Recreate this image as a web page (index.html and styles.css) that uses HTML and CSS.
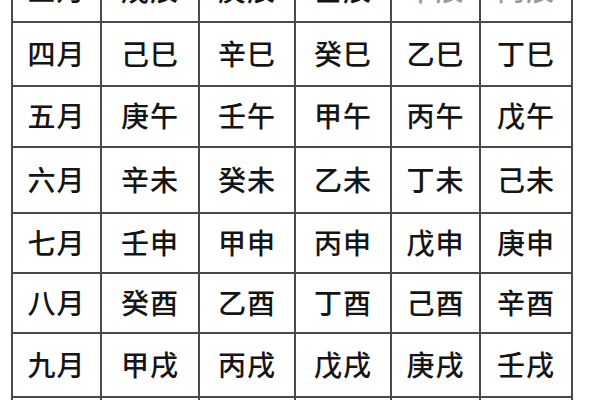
FILE: index.html
```html
<!DOCTYPE html>
<html lang="zh">
<head>
<meta charset="utf-8">
<link rel="stylesheet" href="styles.css">
</head>
<body>
<div class="table">
  <div class="cell">三月</div><div class="cell">戊辰</div><div class="cell">庚辰</div><div class="cell">壬辰</div><div class="cell faint">甲辰</div><div class="cell faint">丙辰</div>
  <div class="cell">四月</div><div class="cell">己巳</div><div class="cell">辛巳</div><div class="cell">癸巳</div><div class="cell">乙巳</div><div class="cell">丁巳</div>
  <div class="cell">五月</div><div class="cell">庚午</div><div class="cell">壬午</div><div class="cell">甲午</div><div class="cell">丙午</div><div class="cell">戊午</div>
  <div class="cell">六月</div><div class="cell">辛未</div><div class="cell">癸未</div><div class="cell">乙未</div><div class="cell">丁未</div><div class="cell">己未</div>
  <div class="cell">七月</div><div class="cell">壬申</div><div class="cell">甲申</div><div class="cell">丙申</div><div class="cell">戊申</div><div class="cell">庚申</div>
  <div class="cell">八月</div><div class="cell">癸酉</div><div class="cell">乙酉</div><div class="cell">丁酉</div><div class="cell">己酉</div><div class="cell">辛酉</div>
  <div class="cell">九月</div><div class="cell">甲戌</div><div class="cell">丙戌</div><div class="cell">戊戌</div><div class="cell">庚戌</div><div class="cell">壬戌</div>
  <div class="cell">十月</div><div class="cell">乙亥</div><div class="cell">丁亥</div><div class="cell">己亥</div><div class="cell">辛亥</div><div class="cell">癸亥</div>
</div>
</body>
</html>
```
FILE: styles.css
```css
html, body {
  margin: 0;
  padding: 0;
  background: #ffffff;
  overflow: hidden;
  width: 600px;
  height: 400px;
}
.table {
  display: grid;
  grid-template-columns: 87px 96px 94px 94px 87px 90px;
  grid-template-rows: 62px 62px 59px 64px 58px 58px 62px 62px;
  gap: 2px;
  padding: 2px;
  background: #4a4a4a;
  width: max-content;
  margin-top: -43px;
  margin-left: 11px;
}
.cell {
  background: #ffffff;
  display: flex;
  align-items: center;
  justify-content: center;
  font-family: "Noto Sans CJK SC", "Noto Sans", sans-serif;
  font-size: 28px;
  font-weight: 500;
  color: #151515;
  padding-bottom: 3px;
  box-sizing: border-box;
  letter-spacing: 1px;
}
.faint {
  color: #9a9a9a;
}
```
